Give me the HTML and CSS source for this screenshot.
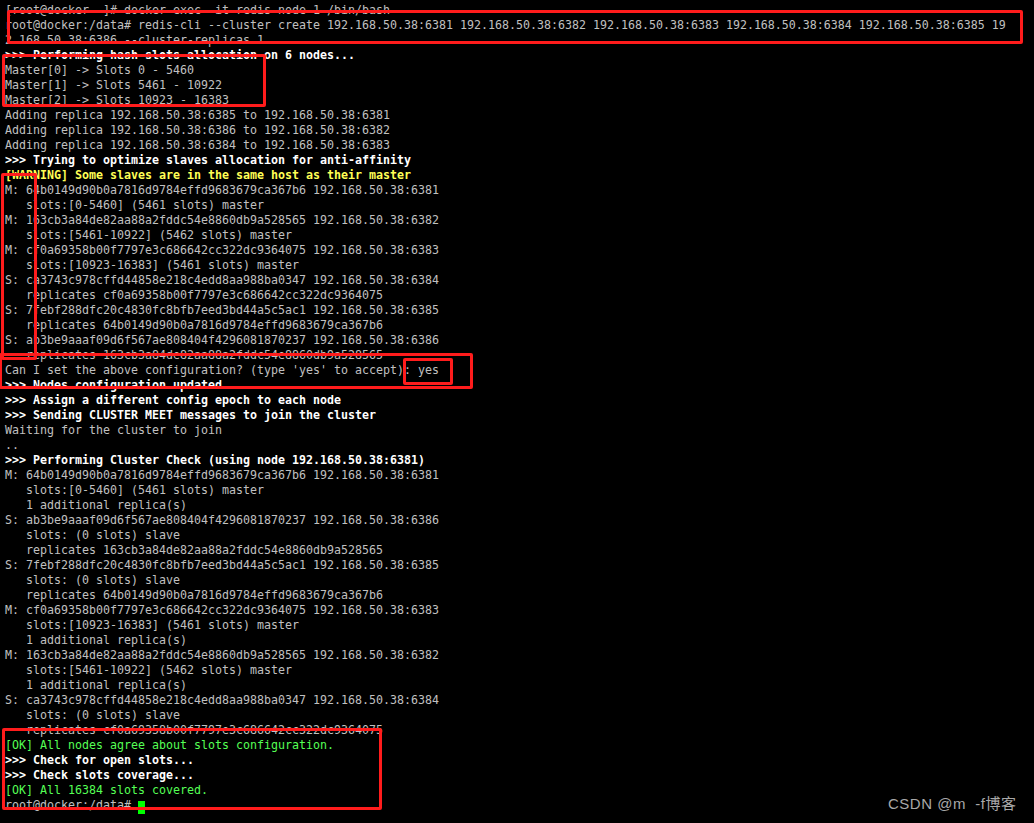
FILE: index.html
```html
<!DOCTYPE html>
<html>
<head>
<meta charset="utf-8">
<link rel="stylesheet" href="styles.css">
</head>
<body>
<div class="screen">
<pre class="term"><span class="ln">[root@docker  ]# docker exec -it redis-node-1 /bin/bash</span>
<span class="ln">root@docker:/data# redis-cli --cluster create 192.168.50.38:6381 192.168.50.38:6382 192.168.50.38:6383 192.168.50.38:6384 192.168.50.38:6385 19</span>
<span class="ln">2.168.50.38:6386 --cluster-replicas 1</span>
<span class="ln b">&gt;&gt;&gt; Performing hash slots allocation on 6 nodes...</span>
<span class="ln">Master[0] -&gt; Slots 0 - 5460</span>
<span class="ln">Master[1] -&gt; Slots 5461 - 10922</span>
<span class="ln">Master[2] -&gt; Slots 10923 - 16383</span>
<span class="ln">Adding replica 192.168.50.38:6385 to 192.168.50.38:6381</span>
<span class="ln">Adding replica 192.168.50.38:6386 to 192.168.50.38:6382</span>
<span class="ln">Adding replica 192.168.50.38:6384 to 192.168.50.38:6383</span>
<span class="ln b">&gt;&gt;&gt; Trying to optimize slaves allocation for anti-affinity</span>
<span class="ln y">[WARNING] Some slaves are in the same host as their master</span>
<span class="ln">M: 64b0149d90b0a7816d9784effd9683679ca367b6 192.168.50.38:6381</span>
<span class="ln">   slots:[0-5460] (5461 slots) master</span>
<span class="ln">M: 163cb3a84de82aa88a2fddc54e8860db9a528565 192.168.50.38:6382</span>
<span class="ln">   slots:[5461-10922] (5462 slots) master</span>
<span class="ln">M: cf0a69358b00f7797e3c686642cc322dc9364075 192.168.50.38:6383</span>
<span class="ln">   slots:[10923-16383] (5461 slots) master</span>
<span class="ln">S: ca3743c978cffd44858e218c4edd8aa988ba0347 192.168.50.38:6384</span>
<span class="ln">   replicates cf0a69358b00f7797e3c686642cc322dc9364075</span>
<span class="ln">S: 7febf288dfc20c4830fc8bfb7eed3bd44a5c5ac1 192.168.50.38:6385</span>
<span class="ln">   replicates 64b0149d90b0a7816d9784effd9683679ca367b6</span>
<span class="ln">S: ab3be9aaaf09d6f567ae808404f4296081870237 192.168.50.38:6386</span>
<span class="ln">   replicates 163cb3a84de82aa88a2fddc54e8860db9a528565</span>
<span class="ln">Can I set the above configuration? (type 'yes' to accept): yes</span>
<span class="ln b">&gt;&gt;&gt; Nodes configuration updated</span>
<span class="ln b">&gt;&gt;&gt; Assign a different config epoch to each node</span>
<span class="ln b">&gt;&gt;&gt; Sending CLUSTER MEET messages to join the cluster</span>
<span class="ln">Waiting for the cluster to join</span>
<span class="ln">..</span>
<span class="ln b">&gt;&gt;&gt; Performing Cluster Check (using node 192.168.50.38:6381)</span>
<span class="ln">M: 64b0149d90b0a7816d9784effd9683679ca367b6 192.168.50.38:6381</span>
<span class="ln">   slots:[0-5460] (5461 slots) master</span>
<span class="ln">   1 additional replica(s)</span>
<span class="ln">S: ab3be9aaaf09d6f567ae808404f4296081870237 192.168.50.38:6386</span>
<span class="ln">   slots: (0 slots) slave</span>
<span class="ln">   replicates 163cb3a84de82aa88a2fddc54e8860db9a528565</span>
<span class="ln">S: 7febf288dfc20c4830fc8bfb7eed3bd44a5c5ac1 192.168.50.38:6385</span>
<span class="ln">   slots: (0 slots) slave</span>
<span class="ln">   replicates 64b0149d90b0a7816d9784effd9683679ca367b6</span>
<span class="ln">M: cf0a69358b00f7797e3c686642cc322dc9364075 192.168.50.38:6383</span>
<span class="ln">   slots:[10923-16383] (5461 slots) master</span>
<span class="ln">   1 additional replica(s)</span>
<span class="ln">M: 163cb3a84de82aa88a2fddc54e8860db9a528565 192.168.50.38:6382</span>
<span class="ln">   slots:[5461-10922] (5462 slots) master</span>
<span class="ln">   1 additional replica(s)</span>
<span class="ln">S: ca3743c978cffd44858e218c4edd8aa988ba0347 192.168.50.38:6384</span>
<span class="ln">   slots: (0 slots) slave</span>
<span class="ln">   replicates cf0a69358b00f7797e3c686642cc322dc9364075</span>
<span class="ln g">[OK] All nodes agree about slots configuration.</span>
<span class="ln b">&gt;&gt;&gt; Check for open slots...</span>
<span class="ln b">&gt;&gt;&gt; Check slots coverage...</span>
<span class="ln g">[OK] All 16384 slots covered.</span>
<span class="ln">root@docker:/data# <span class="cursor"> </span></span></pre>

<div class="mark box1"></div>
<div class="mark box2"></div>
<div class="mark box3"></div>
<div class="mark box4"></div>
<div class="mark box5"></div>
<div class="mark box6"></div>

<div class="watermark">CSDN @m  -f博客</div>
</div>
</body>
</html>
```

FILE: styles.css
```css
html, body {
  margin: 0;
  padding: 0;
  background: #000;
}

.screen {
  position: relative;
  width: 1034px;
  height: 823px;
  overflow: hidden;
  background: #000;
}

.term {
  margin: 0;
  padding: 3px 0 0 5px;
  font-family: "DejaVu Sans Mono", "Liberation Mono", monospace;
  font-size: 11.63px;
  line-height: 15px;
  color: #c0c0c0;
  white-space: pre;
}

.ln {
  display: inline;
}

.b {
  color: #ffffff;
  font-weight: bold;
}

.y {
  color: #ffff55;
  font-weight: bold;
}

.g {
  color: #55ff55;
}

.cursor {
  display: inline-block;
  width: 7px;
  height: 13px;
  background: #00ff00;
  vertical-align: -3px;
}

.mark {
  position: absolute;
  box-sizing: border-box;
  border: 3px solid #ff1c1c;
  border-radius: 2px;
}

.box1 { left: 7px; top: 10px; width: 1016px; height: 34px; }
.box2 { left: 2px; top: 54px; width: 264px; height: 53px; }
.box3 { left: 1px; top: 173px; width: 36px; height: 187px; }
.box4 { left: -1px; top: 353px; width: 474px; height: 36px; }
.box5 { left: 403px; top: 358px; width: 50px; height: 27px; }
.box6 { left: 2px; top: 728px; width: 380px; height: 82px; }

.watermark {
  position: absolute;
  left: 888px;
  top: 794px;
  font-family: "Liberation Sans", "Noto Sans CJK SC", sans-serif;
  font-size: 15px;
  line-height: 20px;
  letter-spacing: 0.5px;
  color: #a8a8a8;
  white-space: pre;
}
```
